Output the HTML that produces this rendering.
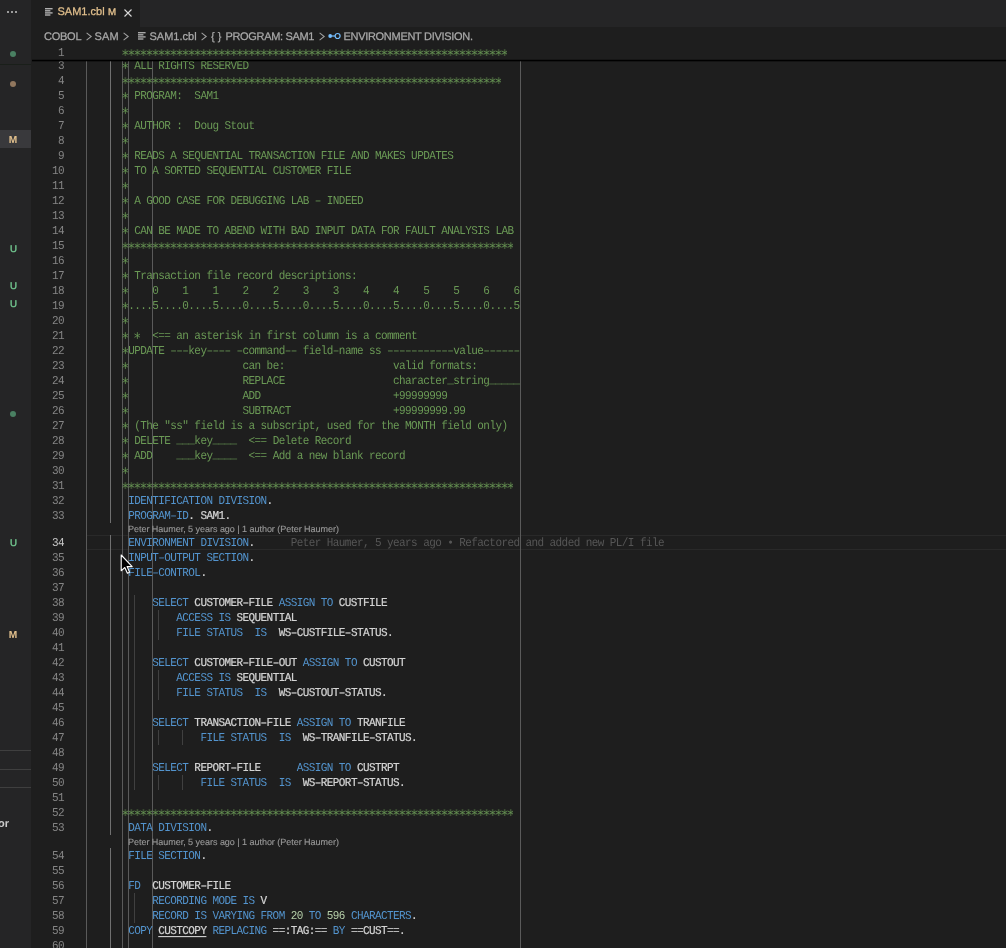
<!DOCTYPE html>
<html><head><meta charset="utf-8"><title>SAM1.cbl</title>
<style>
html,body{margin:0;padding:0;background:#1e1e1e;}
body{width:1006px;height:948px;overflow:hidden;position:relative;font-family:"Liberation Sans",sans-serif;}
#root{position:absolute;left:0;top:0;width:1006px;height:948px;overflow:hidden;background:transparent;will-change:transform;}
.abs{position:absolute;}
#root{text-rendering:geometricPrecision;}
.m{position:absolute;font-family:"Liberation Mono",monospace;font-size:11px;line-height:15px;height:15px;letter-spacing:-0.580px;white-space:pre;transform:scaleY(1.09);transform-origin:0 10.43px;}
.c{color:#6a9955;}
.k{color:#5394ce;}
.t{color:#d4d4d4;-webkit-text-stroke:0.2px #d4d4d4;}
.n{color:#b5cea8;}
.us{margin-top:-1px;}
.u{text-decoration:underline;text-underline-offset:2px;}
.a{font-size:18px;letter-spacing:-4.780px;margin-left:-2.390px;margin-top:3.5px;transform:none;}
.ln{position:absolute;left:32px;width:32px;text-align:right;font-family:"Liberation Mono",monospace;font-size:11px;line-height:15px;height:15px;letter-spacing:-0.580px;color:#858585;white-space:pre;transform:scaleY(1.09);transform-origin:0 10.43px;}
.v{position:absolute;width:1px;}
.s{position:absolute;font-family:"Liberation Sans",sans-serif;white-space:pre;}
.bc{font-size:11px;line-height:18px;height:18px;top:27.5px;color:#a9a9a9;-webkit-text-stroke:0.25px #a9a9a9;}
.cl{font-size:9px;line-height:12px;height:12px;color:#999999;letter-spacing:-0.03px;-webkit-text-stroke:0.12px #999999;}

</style></head><body><div id="root">
<div class="abs" style="left:86px;top:535px;width:920px;height:13px;border-top:1px solid #292929;border-bottom:1px solid #292929;"></div>
<div class="v" style="left:86px;top:44px;height:904px;background:#5a5a5a;"></div>
<div class="v" style="left:122px;top:44px;height:904px;background:#5a5a5a;"></div>
<div class="v" style="left:128px;top:44px;height:904px;background:#5a5a5a;"></div>
<div class="v" style="left:152px;top:44px;height:904px;background:#5a5a5a;"></div>
<div class="v" style="left:520px;top:44px;height:904px;background:#5a5a5a;"></div>
<div class="v" style="left:110px;top:58px;height:465px;background:#707070;"></div>
<div class="v" style="left:110px;top:535px;height:300px;background:#707070;"></div>
<div class="v" style="left:110px;top:848px;height:105px;background:#707070;"></div>
<div class="v" style="left:134px;top:595px;height:195px;background:#404040;"></div>
<div class="v" style="left:134px;top:893px;height:30px;background:#404040;"></div>
<div class="v" style="left:158px;top:610px;height:30px;background:#404040;"></div>
<div class="v" style="left:158px;top:670px;height:30px;background:#404040;"></div>
<div class="v" style="left:158px;top:730px;height:15px;background:#404040;"></div>
<div class="v" style="left:158px;top:775px;height:15px;background:#404040;"></div>
<div class="v" style="left:182px;top:730px;height:15px;background:#404040;"></div>
<div class="v" style="left:182px;top:775px;height:15px;background:#404040;"></div>
<div class="ln" style="top:60px;">3</div>
<svg class="abs" style="left:122.12px;top:58px;" width="6.02" height="15" viewBox="0 0 6.02 15"><path d="M3.38 4.20V11.00M0.44 5.90L6.32 9.30M6.32 5.90L0.44 9.30" stroke="#6a9955" stroke-width="0.8" fill="none"/></svg>
<div class="m c" style="left:128.14px;top:60px;"> ALL RIGHTS RESERVED</div>
<div class="ln" style="top:75px;">4</div>
<svg class="abs" style="left:122.12px;top:73px;" width="379.26" height="15" viewBox="0 0 379.26 15"><defs><pattern id="p1" width="6.02" height="15" patternUnits="userSpaceOnUse"><path d="M3.38 4.20V11.00M0.44 5.90L6.32 9.30M6.32 5.90L0.44 9.30" stroke="#6a9955" stroke-width="0.8" fill="none"/></pattern></defs><rect width="379.26" height="15" fill="url(#p1)"/></svg>
<div class="ln" style="top:90px;">5</div>
<svg class="abs" style="left:122.12px;top:88px;" width="6.02" height="15" viewBox="0 0 6.02 15"><path d="M3.38 4.20V11.00M0.44 5.90L6.32 9.30M6.32 5.90L0.44 9.30" stroke="#6a9955" stroke-width="0.8" fill="none"/></svg>
<div class="m c" style="left:128.14px;top:90px;"> PROGRAM:  SAM1</div>
<div class="ln" style="top:105px;">6</div>
<svg class="abs" style="left:122.12px;top:103px;" width="6.02" height="15" viewBox="0 0 6.02 15"><path d="M3.38 4.20V11.00M0.44 5.90L6.32 9.30M6.32 5.90L0.44 9.30" stroke="#6a9955" stroke-width="0.8" fill="none"/></svg>
<div class="ln" style="top:120px;">7</div>
<svg class="abs" style="left:122.12px;top:118px;" width="6.02" height="15" viewBox="0 0 6.02 15"><path d="M3.38 4.20V11.00M0.44 5.90L6.32 9.30M6.32 5.90L0.44 9.30" stroke="#6a9955" stroke-width="0.8" fill="none"/></svg>
<div class="m c" style="left:128.14px;top:120px;"> AUTHOR :  Doug Stout</div>
<div class="ln" style="top:135px;">8</div>
<svg class="abs" style="left:122.12px;top:133px;" width="6.02" height="15" viewBox="0 0 6.02 15"><path d="M3.38 4.20V11.00M0.44 5.90L6.32 9.30M6.32 5.90L0.44 9.30" stroke="#6a9955" stroke-width="0.8" fill="none"/></svg>
<div class="ln" style="top:150px;">9</div>
<svg class="abs" style="left:122.12px;top:148px;" width="6.02" height="15" viewBox="0 0 6.02 15"><path d="M3.38 4.20V11.00M0.44 5.90L6.32 9.30M6.32 5.90L0.44 9.30" stroke="#6a9955" stroke-width="0.8" fill="none"/></svg>
<div class="m c" style="left:128.14px;top:150px;"> READS A SEQUENTIAL TRANSACTION FILE AND MAKES UPDATES</div>
<div class="ln" style="top:165px;">10</div>
<svg class="abs" style="left:122.12px;top:163px;" width="6.02" height="15" viewBox="0 0 6.02 15"><path d="M3.38 4.20V11.00M0.44 5.90L6.32 9.30M6.32 5.90L0.44 9.30" stroke="#6a9955" stroke-width="0.8" fill="none"/></svg>
<div class="m c" style="left:128.14px;top:165px;"> TO A SORTED SEQUENTIAL CUSTOMER FILE</div>
<div class="ln" style="top:180px;">11</div>
<svg class="abs" style="left:122.12px;top:178px;" width="6.02" height="15" viewBox="0 0 6.02 15"><path d="M3.38 4.20V11.00M0.44 5.90L6.32 9.30M6.32 5.90L0.44 9.30" stroke="#6a9955" stroke-width="0.8" fill="none"/></svg>
<div class="ln" style="top:195px;">12</div>
<svg class="abs" style="left:122.12px;top:193px;" width="6.02" height="15" viewBox="0 0 6.02 15"><path d="M3.38 4.20V11.00M0.44 5.90L6.32 9.30M6.32 5.90L0.44 9.30" stroke="#6a9955" stroke-width="0.8" fill="none"/></svg>
<div class="m c" style="left:128.14px;top:195px;"> A GOOD CASE FOR DEBUGGING LAB – INDEED</div>
<div class="ln" style="top:210px;">13</div>
<svg class="abs" style="left:122.12px;top:208px;" width="6.02" height="15" viewBox="0 0 6.02 15"><path d="M3.38 4.20V11.00M0.44 5.90L6.32 9.30M6.32 5.90L0.44 9.30" stroke="#6a9955" stroke-width="0.8" fill="none"/></svg>
<div class="ln" style="top:225px;">14</div>
<svg class="abs" style="left:122.12px;top:223px;" width="6.02" height="15" viewBox="0 0 6.02 15"><path d="M3.38 4.20V11.00M0.44 5.90L6.32 9.30M6.32 5.90L0.44 9.30" stroke="#6a9955" stroke-width="0.8" fill="none"/></svg>
<div class="m c" style="left:128.14px;top:225px;"> CAN BE MADE TO ABEND WITH BAD INPUT DATA FOR FAULT ANALYSIS LAB</div>
<div class="ln" style="top:240px;">15</div>
<svg class="abs" style="left:122.12px;top:238px;" width="391.30" height="15" viewBox="0 0 391.30 15"><defs><pattern id="p2" width="6.02" height="15" patternUnits="userSpaceOnUse"><path d="M3.38 4.20V11.00M0.44 5.90L6.32 9.30M6.32 5.90L0.44 9.30" stroke="#6a9955" stroke-width="0.8" fill="none"/></pattern></defs><rect width="391.30" height="15" fill="url(#p2)"/></svg>
<div class="ln" style="top:255px;">16</div>
<svg class="abs" style="left:122.12px;top:253px;" width="6.02" height="15" viewBox="0 0 6.02 15"><path d="M3.38 4.20V11.00M0.44 5.90L6.32 9.30M6.32 5.90L0.44 9.30" stroke="#6a9955" stroke-width="0.8" fill="none"/></svg>
<div class="ln" style="top:270px;">17</div>
<svg class="abs" style="left:122.12px;top:268px;" width="6.02" height="15" viewBox="0 0 6.02 15"><path d="M3.38 4.20V11.00M0.44 5.90L6.32 9.30M6.32 5.90L0.44 9.30" stroke="#6a9955" stroke-width="0.8" fill="none"/></svg>
<div class="m c" style="left:128.14px;top:270px;"> Transaction file record descriptions:</div>
<div class="ln" style="top:285px;">18</div>
<svg class="abs" style="left:122.12px;top:283px;" width="6.02" height="15" viewBox="0 0 6.02 15"><path d="M3.38 4.20V11.00M0.44 5.90L6.32 9.30M6.32 5.90L0.44 9.30" stroke="#6a9955" stroke-width="0.8" fill="none"/></svg>
<div class="m c" style="left:128.14px;top:285px;">    0    1    1    2    2    3    3    4    4    5    5    6    6</div>
<div class="ln" style="top:300px;">19</div>
<svg class="abs" style="left:122.12px;top:298px;" width="6.02" height="15" viewBox="0 0 6.02 15"><path d="M3.38 4.20V11.00M0.44 5.90L6.32 9.30M6.32 5.90L0.44 9.30" stroke="#6a9955" stroke-width="0.8" fill="none"/></svg>
<div class="m c" style="left:128.14px;top:300px;">....5....0....5....0....5....0....5....0....5....0....5....0....5</div>
<div class="ln" style="top:315px;">20</div>
<svg class="abs" style="left:122.12px;top:313px;" width="6.02" height="15" viewBox="0 0 6.02 15"><path d="M3.38 4.20V11.00M0.44 5.90L6.32 9.30M6.32 5.90L0.44 9.30" stroke="#6a9955" stroke-width="0.8" fill="none"/></svg>
<div class="ln" style="top:330px;">21</div>
<svg class="abs" style="left:122.12px;top:328px;" width="6.02" height="15" viewBox="0 0 6.02 15"><path d="M3.38 4.20V11.00M0.44 5.90L6.32 9.30M6.32 5.90L0.44 9.30" stroke="#6a9955" stroke-width="0.8" fill="none"/></svg>
<svg class="abs" style="left:134.16px;top:328px;" width="6.02" height="15" viewBox="0 0 6.02 15"><path d="M3.38 4.20V11.00M0.44 5.90L6.32 9.30M6.32 5.90L0.44 9.30" stroke="#6a9955" stroke-width="0.8" fill="none"/></svg>
<div class="m c" style="left:140.18px;top:330px;">  &lt;== an asterisk in first column is a comment</div>
<div class="ln" style="top:345px;">22</div>
<svg class="abs" style="left:122.12px;top:343px;" width="6.02" height="15" viewBox="0 0 6.02 15"><path d="M3.38 4.20V11.00M0.44 5.90L6.32 9.30M6.32 5.90L0.44 9.30" stroke="#6a9955" stroke-width="0.8" fill="none"/></svg>
<div class="m c" style="left:128.14px;top:345px;">UPDATE –––key–––– –command–– field–name ss –––––––––––value––––––</div>
<div class="ln" style="top:360px;">23</div>
<svg class="abs" style="left:122.12px;top:358px;" width="6.02" height="15" viewBox="0 0 6.02 15"><path d="M3.38 4.20V11.00M0.44 5.90L6.32 9.30M6.32 5.90L0.44 9.30" stroke="#6a9955" stroke-width="0.8" fill="none"/></svg>
<div class="m c" style="left:128.14px;top:360px;">                   can be:                  valid formats:</div>
<div class="ln" style="top:375px;">24</div>
<svg class="abs" style="left:122.12px;top:373px;" width="6.02" height="15" viewBox="0 0 6.02 15"><path d="M3.38 4.20V11.00M0.44 5.90L6.32 9.30M6.32 5.90L0.44 9.30" stroke="#6a9955" stroke-width="0.8" fill="none"/></svg>
<div class="m c" style="left:128.14px;top:375px;">                   REPLACE                  character</div>
<div class="m c us" style="left:447.20px;top:375px;">_</div>
<div class="m c" style="left:453.22px;top:375px;">string</div>
<div class="m c us" style="left:489.34px;top:375px;">_____</div>
<div class="ln" style="top:390px;">25</div>
<svg class="abs" style="left:122.12px;top:388px;" width="6.02" height="15" viewBox="0 0 6.02 15"><path d="M3.38 4.20V11.00M0.44 5.90L6.32 9.30M6.32 5.90L0.44 9.30" stroke="#6a9955" stroke-width="0.8" fill="none"/></svg>
<div class="m c" style="left:128.14px;top:390px;">                   ADD                      +99999999</div>
<div class="ln" style="top:405px;">26</div>
<svg class="abs" style="left:122.12px;top:403px;" width="6.02" height="15" viewBox="0 0 6.02 15"><path d="M3.38 4.20V11.00M0.44 5.90L6.32 9.30M6.32 5.90L0.44 9.30" stroke="#6a9955" stroke-width="0.8" fill="none"/></svg>
<div class="m c" style="left:128.14px;top:405px;">                   SUBTRACT                 +99999999.99</div>
<div class="ln" style="top:420px;">27</div>
<svg class="abs" style="left:122.12px;top:418px;" width="6.02" height="15" viewBox="0 0 6.02 15"><path d="M3.38 4.20V11.00M0.44 5.90L6.32 9.30M6.32 5.90L0.44 9.30" stroke="#6a9955" stroke-width="0.8" fill="none"/></svg>
<div class="m c" style="left:128.14px;top:420px;"> (The "ss" field is a subscript, used for the MONTH field only)</div>
<div class="ln" style="top:435px;">28</div>
<svg class="abs" style="left:122.12px;top:433px;" width="6.02" height="15" viewBox="0 0 6.02 15"><path d="M3.38 4.20V11.00M0.44 5.90L6.32 9.30M6.32 5.90L0.44 9.30" stroke="#6a9955" stroke-width="0.8" fill="none"/></svg>
<div class="m c" style="left:128.14px;top:435px;"> DELETE </div>
<div class="m c us" style="left:176.30px;top:435px;">___</div>
<div class="m c" style="left:194.36px;top:435px;">key</div>
<div class="m c us" style="left:212.42px;top:435px;">____</div>
<div class="m c" style="left:236.50px;top:435px;">  &lt;== Delete Record</div>
<div class="ln" style="top:450px;">29</div>
<svg class="abs" style="left:122.12px;top:448px;" width="6.02" height="15" viewBox="0 0 6.02 15"><path d="M3.38 4.20V11.00M0.44 5.90L6.32 9.30M6.32 5.90L0.44 9.30" stroke="#6a9955" stroke-width="0.8" fill="none"/></svg>
<div class="m c" style="left:128.14px;top:450px;"> ADD    </div>
<div class="m c us" style="left:176.30px;top:450px;">___</div>
<div class="m c" style="left:194.36px;top:450px;">key</div>
<div class="m c us" style="left:212.42px;top:450px;">____</div>
<div class="m c" style="left:236.50px;top:450px;">  &lt;== Add a new blank record</div>
<div class="ln" style="top:465px;">30</div>
<svg class="abs" style="left:122.12px;top:463px;" width="6.02" height="15" viewBox="0 0 6.02 15"><path d="M3.38 4.20V11.00M0.44 5.90L6.32 9.30M6.32 5.90L0.44 9.30" stroke="#6a9955" stroke-width="0.8" fill="none"/></svg>
<div class="ln" style="top:480px;">31</div>
<svg class="abs" style="left:122.12px;top:478px;" width="391.30" height="15" viewBox="0 0 391.30 15"><defs><pattern id="p3" width="6.02" height="15" patternUnits="userSpaceOnUse"><path d="M3.38 4.20V11.00M0.44 5.90L6.32 9.30M6.32 5.90L0.44 9.30" stroke="#6a9955" stroke-width="0.8" fill="none"/></pattern></defs><rect width="391.30" height="15" fill="url(#p3)"/></svg>
<div class="ln" style="top:495px;">32</div>
<div class="m k" style="left:128.14px;top:495px;">IDENTIFICATION</div>
<div class="m k" style="left:218.44px;top:495px;">DIVISION</div>
<div class="m t" style="left:266.60px;top:495px;">.</div>
<div class="ln" style="top:510px;">33</div>
<div class="m k" style="left:128.14px;top:510px;">PROGRAM–ID</div>
<div class="m t" style="left:188.34px;top:510px;">.</div>
<div class="m t" style="left:200.38px;top:510px;">SAM1.</div>
<div class="ln" style="top:537px;color:#c6c6c6;">34</div>
<div class="m k" style="left:128.14px;top:537px;">ENVIRONMENT</div>
<div class="m k" style="left:200.38px;top:537px;">DIVISION</div>
<div class="m t" style="left:248.54px;top:537px;">.</div>
<div class="ln" style="top:552px;">35</div>
<div class="m k" style="left:128.14px;top:552px;">INPUT–OUTPUT</div>
<div class="m k" style="left:206.40px;top:552px;">SECTION</div>
<div class="m t" style="left:248.54px;top:552px;">.</div>
<div class="ln" style="top:567px;">36</div>
<div class="m k" style="left:128.14px;top:567px;">FILE–CONTROL</div>
<div class="m t" style="left:200.38px;top:567px;">.</div>
<div class="ln" style="top:582px;">37</div>
<div class="ln" style="top:597px;">38</div>
<div class="m k" style="left:152.22px;top:597px;">SELECT</div>
<div class="m t" style="left:194.36px;top:597px;">CUSTOMER–FILE</div>
<div class="m k" style="left:278.64px;top:597px;">ASSIGN</div>
<div class="m k" style="left:320.78px;top:597px;">TO</div>
<div class="m t" style="left:338.84px;top:597px;">CUSTFILE</div>
<div class="ln" style="top:612px;">39</div>
<div class="m k" style="left:176.30px;top:612px;">ACCESS</div>
<div class="m k" style="left:218.44px;top:612px;">IS</div>
<div class="m t" style="left:236.50px;top:612px;">SEQUENTIAL</div>
<div class="ln" style="top:627px;">40</div>
<div class="m k" style="left:176.30px;top:627px;">FILE</div>
<div class="m k" style="left:206.40px;top:627px;">STATUS</div>
<div class="m k" style="left:254.56px;top:627px;">IS</div>
<div class="m t" style="left:278.64px;top:627px;">WS–CUSTFILE–STATUS.</div>
<div class="ln" style="top:642px;">41</div>
<div class="ln" style="top:657px;">42</div>
<div class="m k" style="left:152.22px;top:657px;">SELECT</div>
<div class="m t" style="left:194.36px;top:657px;">CUSTOMER–FILE–OUT</div>
<div class="m k" style="left:302.72px;top:657px;">ASSIGN</div>
<div class="m k" style="left:344.86px;top:657px;">TO</div>
<div class="m t" style="left:362.92px;top:657px;">CUSTOUT</div>
<div class="ln" style="top:672px;">43</div>
<div class="m k" style="left:176.30px;top:672px;">ACCESS</div>
<div class="m k" style="left:218.44px;top:672px;">IS</div>
<div class="m t" style="left:236.50px;top:672px;">SEQUENTIAL</div>
<div class="ln" style="top:687px;">44</div>
<div class="m k" style="left:176.30px;top:687px;">FILE</div>
<div class="m k" style="left:206.40px;top:687px;">STATUS</div>
<div class="m k" style="left:254.56px;top:687px;">IS</div>
<div class="m t" style="left:278.64px;top:687px;">WS–CUSTOUT–STATUS.</div>
<div class="ln" style="top:702px;">45</div>
<div class="ln" style="top:717px;">46</div>
<div class="m k" style="left:152.22px;top:717px;">SELECT</div>
<div class="m t" style="left:194.36px;top:717px;">TRANSACTION–FILE</div>
<div class="m k" style="left:296.70px;top:717px;">ASSIGN</div>
<div class="m k" style="left:338.84px;top:717px;">TO</div>
<div class="m t" style="left:356.90px;top:717px;">TRANFILE</div>
<div class="ln" style="top:732px;">47</div>
<div class="m k" style="left:200.38px;top:732px;">FILE</div>
<div class="m k" style="left:230.48px;top:732px;">STATUS</div>
<div class="m k" style="left:278.64px;top:732px;">IS</div>
<div class="m t" style="left:302.72px;top:732px;">WS–TRANFILE–STATUS.</div>
<div class="ln" style="top:747px;">48</div>
<div class="ln" style="top:762px;">49</div>
<div class="m k" style="left:152.22px;top:762px;">SELECT</div>
<div class="m t" style="left:194.36px;top:762px;">REPORT–FILE</div>
<div class="m k" style="left:296.70px;top:762px;">ASSIGN</div>
<div class="m k" style="left:338.84px;top:762px;">TO</div>
<div class="m t" style="left:356.90px;top:762px;">CUSTRPT</div>
<div class="ln" style="top:777px;">50</div>
<div class="m k" style="left:200.38px;top:777px;">FILE</div>
<div class="m k" style="left:230.48px;top:777px;">STATUS</div>
<div class="m k" style="left:278.64px;top:777px;">IS</div>
<div class="m t" style="left:302.72px;top:777px;">WS–REPORT–STATUS.</div>
<div class="ln" style="top:792px;">51</div>
<div class="ln" style="top:807px;">52</div>
<svg class="abs" style="left:122.12px;top:805px;" width="391.30" height="15" viewBox="0 0 391.30 15"><defs><pattern id="p4" width="6.02" height="15" patternUnits="userSpaceOnUse"><path d="M3.38 4.20V11.00M0.44 5.90L6.32 9.30M6.32 5.90L0.44 9.30" stroke="#6a9955" stroke-width="0.8" fill="none"/></pattern></defs><rect width="391.30" height="15" fill="url(#p4)"/></svg>
<div class="ln" style="top:822px;">53</div>
<div class="m k" style="left:128.14px;top:822px;">DATA</div>
<div class="m k" style="left:158.24px;top:822px;">DIVISION</div>
<div class="m t" style="left:206.40px;top:822px;">.</div>
<div class="ln" style="top:850px;">54</div>
<div class="m k" style="left:128.14px;top:850px;">FILE</div>
<div class="m k" style="left:158.24px;top:850px;">SECTION</div>
<div class="m t" style="left:200.38px;top:850px;">.</div>
<div class="ln" style="top:865px;">55</div>
<div class="ln" style="top:880px;">56</div>
<div class="m k" style="left:128.14px;top:880px;">FD</div>
<div class="m t" style="left:152.22px;top:880px;">CUSTOMER–FILE</div>
<div class="ln" style="top:895px;">57</div>
<div class="m k" style="left:152.22px;top:895px;">RECORDING</div>
<div class="m k" style="left:212.42px;top:895px;">MODE</div>
<div class="m k" style="left:242.52px;top:895px;">IS</div>
<div class="m t" style="left:260.58px;top:895px;">V</div>
<div class="ln" style="top:910px;">58</div>
<div class="m k" style="left:152.22px;top:910px;">RECORD</div>
<div class="m k" style="left:194.36px;top:910px;">IS</div>
<div class="m k" style="left:212.42px;top:910px;">VARYING</div>
<div class="m k" style="left:260.58px;top:910px;">FROM</div>
<div class="m n" style="left:290.68px;top:910px;">20</div>
<div class="m k" style="left:308.74px;top:910px;">TO</div>
<div class="m n" style="left:326.80px;top:910px;">596</div>
<div class="m k" style="left:350.88px;top:910px;">CHARACTERS</div>
<div class="m t" style="left:411.08px;top:910px;">.</div>
<div class="ln" style="top:925px;">59</div>
<div class="m k" style="left:128.14px;top:925px;">COPY</div>
<div class="m t u" style="left:158.24px;top:925px;">CUSTCOPY</div>
<div class="m k" style="left:212.42px;top:925px;">REPLACING</div>
<div class="m t" style="left:272.62px;top:925px;">==:TAG:==</div>
<div class="m k" style="left:332.82px;top:925px;">BY</div>
<div class="m t" style="left:350.88px;top:925px;">==CUST==.</div>
<div class="ln" style="top:940px;">60</div>
<div class="m" style="left:290.68px;top:537px;color:#565656;">Peter Haumer, 5 years ago • Refactored and added new PL/I file</div>
<div class="s cl" style="left:128px;top:523px;">Peter Haumer, 5 years ago | 1 author (Peter Haumer)</div>
<div class="s cl" style="left:128px;top:836px;">Peter Haumer, 5 years ago | 1 author (Peter Haumer)</div>
<div class="abs" style="left:32px;top:45px;width:974px;height:15px;background:#1e1e1e;"></div>
<div class="abs" style="left:32px;top:60px;width:974px;height:1px;background:#000;"></div>
<div class="abs" style="left:32px;top:59px;width:974px;height:1px;background:rgba(0,0,0,0.25);"></div>
<div class="abs" style="left:32px;top:61px;width:974px;height:1px;background:rgba(0,0,0,0.3);"></div>
<div class="ln" style="top:47px;">1</div>
<svg class="abs" style="left:122.12px;top:45px;" width="385.28" height="15" viewBox="0 0 385.28 15"><defs><pattern id="p5" width="6.02" height="15" patternUnits="userSpaceOnUse"><path d="M3.38 4.20V11.00M0.44 5.90L6.32 9.30M6.32 5.90L0.44 9.30" stroke="#6a9955" stroke-width="0.8" fill="none"/></pattern></defs><rect width="385.28" height="15" fill="url(#p5)"/></svg>
<div class="abs" style="left:32px;top:27px;width:974px;height:18px;background:#1e1e1e;"></div>
<div class="s bc" style="left:44px;letter-spacing:-0.25px;">COBOL</div>
<svg class="abs" style="left:86px;top:32px;" width="7" height="9" viewBox="0 0 7 9"><path d="M0.6 0.9 L5.2 4.5 L0.6 8.1" fill="none" stroke="#a0a0a0" stroke-width="1.05"/></svg>
<div class="s bc" style="left:94.5px;letter-spacing:0.2px;">SAM</div>
<svg class="abs" style="left:122.5px;top:32px;" width="7" height="9" viewBox="0 0 7 9"><path d="M0.6 0.9 L5.2 4.5 L0.6 8.1" fill="none" stroke="#a0a0a0" stroke-width="1.05"/></svg>
<svg class="abs" style="left:137.5px;top:32px;" width="8" height="8" viewBox="0 0 8 8"><g fill="#a8a8a8"><rect x="0" y="0" width="7.6" height="1.4"/><rect x="0" y="2.1" width="5.4" height="1.4"/><rect x="0" y="4.2" width="7.6" height="1.4"/><rect x="0" y="6.3" width="5.4" height="1.4"/></g></svg>
<div class="s bc" style="left:149.5px;">SAM1.cbl</div>
<svg class="abs" style="left:201px;top:32px;" width="7" height="9" viewBox="0 0 7 9"><path d="M0.6 0.9 L5.2 4.5 L0.6 8.1" fill="none" stroke="#a0a0a0" stroke-width="1.05"/></svg>
<div class="s bc" style="left:211px;letter-spacing:3px;">{}</div>
<div class="s bc" style="left:225.5px;letter-spacing:-0.33px;">PROGRAM: SAM1</div>
<svg class="abs" style="left:318.5px;top:32px;" width="7" height="9" viewBox="0 0 7 9"><path d="M0.6 0.9 L5.2 4.5 L0.6 8.1" fill="none" stroke="#a0a0a0" stroke-width="1.05"/></svg>
<svg class="abs" style="left:327.5px;top:32px;" width="13" height="8" viewBox="0 0 13 8"><circle cx="2.2" cy="4" r="1.9" fill="#75beff"/><rect x="3.5" y="3.4" width="3.5" height="1.2" fill="#75beff"/><circle cx="9.6" cy="4" r="2.5" fill="none" stroke="#75beff" stroke-width="1.2"/></svg>
<div class="s bc" style="left:343.5px;letter-spacing:-0.3px;">ENVIRONMENT DIVISION.</div>
<div class="abs" style="left:31px;top:0;width:975px;height:27px;background:#252526;"></div>
<div class="abs" style="left:31px;top:0;width:109px;height:27px;background:#1e1e1e;"></div>
<svg class="abs" style="left:45.3px;top:8px;" width="8" height="8" viewBox="0 0 8 8"><g fill="#b0b0b0"><rect x="0" y="0" width="7.6" height="1.4"/><rect x="0" y="2.1" width="5.4" height="1.4"/><rect x="0" y="4.2" width="7.6" height="1.4"/><rect x="0" y="6.3" width="5.4" height="1.4"/></g></svg>
<div class="s" style="left:57.5px;top:4px;font-size:11px;line-height:16px;color:#e2c08d;-webkit-text-stroke:0.25px #e2c08d;">SAM1.cbl</div>
<div class="s" style="left:108px;top:5px;font-size:9.7px;line-height:16px;color:#e2c08d;-webkit-text-stroke:0.35px #e2c08d;">M</div>
<svg class="abs" style="left:124.2px;top:9px;" width="8" height="8" viewBox="0 0 8 8"><path d="M0.5 0.5 L7.5 7.5 M7.5 0.5 L0.5 7.5" stroke="#d8d8d8" stroke-width="1.1" fill="none"/></svg>
<div class="abs" style="left:0;top:0;width:31px;height:948px;background:#252526;"></div>
<div class="abs" style="left:6.5px;top:11px;width:2px;height:2px;border-radius:1px;background:#c5c5c5;"></div>
<div class="abs" style="left:10.5px;top:11px;width:2px;height:2px;border-radius:1px;background:#c5c5c5;"></div>
<div class="abs" style="left:14.5px;top:11px;width:2px;height:2px;border-radius:1px;background:#c5c5c5;"></div>
<div class="abs" style="left:0;top:64px;width:31px;height:1px;background:#1a1f1a;"></div>
<div class="abs" style="left:0;top:130px;width:31px;height:18px;background:#39393c;"></div>
<div class="abs" style="left:10px;top:51px;width:6px;height:6px;border-radius:3px;background:#4a8062;"></div>
<div class="abs" style="left:10px;top:81px;width:6px;height:6px;border-radius:3px;background:#91775e;"></div>
<div class="abs" style="left:10px;top:411px;width:6px;height:6px;border-radius:3px;background:#4a8062;"></div>
<div class="s" style="left:3px;width:20px;text-align:center;top:132.5px;font-size:10.2px;line-height:16px;font-weight:bold;color:#e2c08d;">M</div>
<div class="s" style="left:3px;width:20px;text-align:center;top:627.5px;font-size:10.2px;line-height:16px;font-weight:bold;color:#e2c08d;">M</div>
<div class="s" style="left:3.5px;width:20px;text-align:center;top:242.3px;font-size:9.7px;line-height:16px;color:#73c991;-webkit-text-stroke:0.35px #73c991;">U</div>
<div class="s" style="left:3.5px;width:20px;text-align:center;top:279.3px;font-size:9.7px;line-height:16px;color:#73c991;-webkit-text-stroke:0.35px #73c991;">U</div>
<div class="s" style="left:3.5px;width:20px;text-align:center;top:297.3px;font-size:9.7px;line-height:16px;color:#73c991;-webkit-text-stroke:0.35px #73c991;">U</div>
<div class="s" style="left:3.5px;width:20px;text-align:center;top:536.3px;font-size:9.7px;line-height:16px;color:#73c991;-webkit-text-stroke:0.35px #73c991;">U</div>
<div class="abs" style="left:0;top:750px;width:31px;height:1px;background:#3f3f3f;"></div>
<div class="abs" style="left:0;top:769px;width:31px;height:1px;background:#3f3f3f;"></div>
<div class="abs" style="left:0;top:787px;width:31px;height:1px;background:#3f3f3f;"></div>
<div class="s" style="left:-2px;top:816px;font-size:11px;line-height:16px;font-weight:bold;color:#cccccc;">or</div>
<svg class="abs" style="left:119.3px;top:553.2px;" width="16" height="22" viewBox="0 0 16 22"><path d="M2.2 2 L2.2 17.8 L5.8 14.5 L8.4 20.3 L10.6 19.3 L8.1 13.6 L13.2 13.6 Z" fill="#000" stroke="#fff" stroke-width="1.1" stroke-linejoin="round"/></svg>
</div></body></html>
